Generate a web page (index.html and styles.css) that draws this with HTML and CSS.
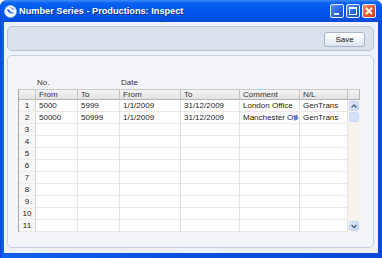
FILE: index.html
```html
<!DOCTYPE html>
<html lang="en">
<head>
  <meta charset="UTF-8" />
  <title>Number Series - Productions: Inspect</title>
  <link rel="stylesheet" href="styles.css">
</head>
<body>
  <div class="window">
    <!-- title bar -->
    <div class="titlebar">
      <svg class="app-icon" width="13" height="13" viewBox="0 0 13 13">
        <circle cx="6.5" cy="6.5" r="6" fill="#f4f8ff" stroke="#9dbdf0" stroke-width="0.8"/>
        <path d="M3 4.5 C4 8.5 8.5 10 10.5 7 C9 8.2 6.5 7.6 5.6 5.6 C5 4.4 4 4 3 4.5 Z" fill="#1c5fd8"/>
        <path d="M6 2.6 C8 2.2 10 3.6 10.4 5.4 C9.2 4.2 7.8 3.6 6 2.6 Z" fill="#1c5fd8"/>
      </svg>
      <span class="title">Number Series - Productions: Inspect</span>
      <div class="caption-buttons">
        <span class="cap-btn"><svg width="12" height="12" viewBox="0 0 12 12"><rect x="3" y="8" width="5" height="2" fill="#fff"/></svg></span>
        <span class="cap-btn"><svg width="12" height="12" viewBox="0 0 12 12"><rect x="2.5" y="2.5" width="7" height="7" fill="none" stroke="#fff" stroke-width="1"/><rect x="2" y="2" width="8" height="2" fill="#fff"/></svg></span>
        <span class="cap-btn close"><svg width="12" height="12" viewBox="0 0 12 12"><path d="M3 3 L9 9 M9 3 L3 9" stroke="#fff" stroke-width="1.8"/></svg></span>
      </div>
    </div>

    <div class="content">
      <div class="toolbar">
        <button class="save">Save</button>
      </div>

      <div class="panel">
        <div class="group-labels">
          <span class="lbl-no">No.</span>
          <span>Date</span>
        </div>

        <table class="grid">
          <colgroup>
            <col class="c-num"><col class="c-from"><col class="c-to"><col class="c-dfrom">
            <col class="c-dto"><col class="c-comment"><col class="c-nl"><col class="c-scroll">
          </colgroup>
          <thead>
            <tr><th></th><th>From</th><th>To</th><th>From</th><th>To</th><th>Comment</th><th>N/L</th><th></th></tr>
          </thead>
          <tbody>
            <tr>
              <td class="num">1</td><td>5000</td><td>5999</td><td>1/1/2009</td><td>31/12/2009</td><td>London Office</td><td>GenTrans</td>
              <td class="scroll-cell" rowspan="11">
                <div class="scrollbar">
                  <span class="arrow"><svg width="8" height="8" viewBox="0 0 8 8"><path d="M1.5 5.5 L4 3 L6.5 5.5" fill="none" stroke="#4d6185" stroke-width="1.3"/></svg></span>
                  <span class="thumb"></span>
                  <span class="track"></span>
                  <span class="arrow"><svg width="8" height="8" viewBox="0 0 8 8"><path d="M1.5 3 L4 5.5 L6.5 3" fill="none" stroke="#4d6185" stroke-width="1.3"/></svg></span>
                </div>
              </td>
            </tr>
            <tr>
              <td class="num">2</td><td>50000</td><td>50999</td><td>1/1/2009</td><td>31/12/2009</td>
              <td class="clipped"><div class="clip"><span class="clip-text">Manchester Office</span><span class="more"></span></div></td>
              <td>GenTrans</td>
            </tr>
            <tr><td class="num">3</td><td></td><td></td><td></td><td></td><td></td><td></td></tr>
            <tr><td class="num">4</td><td></td><td></td><td></td><td></td><td></td><td></td></tr>
            <tr><td class="num">5</td><td></td><td></td><td></td><td></td><td></td><td></td></tr>
            <tr><td class="num">6</td><td></td><td></td><td></td><td></td><td></td><td></td></tr>
            <tr><td class="num">7</td><td></td><td></td><td></td><td></td><td></td><td></td></tr>
            <tr><td class="num">8</td><td></td><td></td><td></td><td></td><td></td><td></td></tr>
            <tr><td class="num">9</td><td></td><td></td><td></td><td></td><td></td><td></td></tr>
            <tr><td class="num">10</td><td></td><td></td><td></td><td></td><td></td><td></td></tr>
            <tr><td class="num">11</td><td></td><td></td><td></td><td></td><td></td><td></td></tr>
          </tbody>
        </table>
      </div>
    </div>
  </div>
</body>
</html>
```

FILE: styles.css
```css
* { box-sizing: border-box; margin: 0; padding: 0; }

body {
  width: 382px;
  height: 258px;
  overflow: hidden;
  background: #fff;
  font-family: 'Liberation Sans', Arial, sans-serif;
  font-size: 8px;
  color: #222;
}

.window {
  height: 258px;
  display: flex;
  flex-direction: column;
  background: linear-gradient(90deg, #0a45d6, #1060ee 3px, #0a4fe0 50%, #0b4ad8);
  border-radius: 7px 7px 0 0;
}

/* title bar */
.titlebar {
  height: 22px;
  flex: none;
  display: flex;
  align-items: center;
  padding: 0 6px 0 4px;
  border-radius: 7px 7px 0 0;
  background: linear-gradient(#3f8cf7 0, #0a62f2 3px, #0058ee 40%, #0052e6 80%, #0049d6 100%);
}
.app-icon { flex: none; margin-right: 2px; }
.title {
  flex: 1;
  color: #fff;
  font-weight: bold;
  font-size: 9.2px;
  text-shadow: 1px 1px 0 #0a2f9a;
  white-space: nowrap;
}
.caption-buttons { display: flex; gap: 2px; }
.cap-btn {
  width: 14px;
  height: 14px;
  display: flex;
  align-items: center;
  justify-content: center;
  border: 1px solid #e6eeff;
  border-radius: 2px;
  background: linear-gradient(135deg, #5c92f8, #2a63e6 60%, #1d52d2);
}
.cap-btn.close {
  background: linear-gradient(135deg, #f0916e, #e25a33 55%, #c9401c);
}

/* client area */
.content {
  flex: 1;
  margin: 0 4px 5px;
  padding: 4px 4px 5px 3px;
  display: flex;
  flex-direction: column;
  gap: 4px;
  background: #eef1f9;
}

.toolbar {
  height: 25px;
  flex: none;
  display: flex;
  justify-content: flex-end;
  align-items: flex-start;
  padding: 5px 8px 0 0;
  border: 1px solid #b7c4dc;
  border-radius: 5px;
  background: #d9e1ef;
}
.save {
  width: 41px;
  height: 15px;
  border: 1px solid #a7b4cc;
  border-radius: 3px;
  background: linear-gradient(#ffffff, #eef1f7 60%, #dde3ee);
  font-family: 'Liberation Sans', Arial, sans-serif;
  font-size: 8px;
  color: #111;
}

.panel {
  flex: 1;
  padding: 21px 0 0 10px;
  border: 1px solid #c5d0e3;
  border-radius: 5px;
  background: #f3f5fb;
}

.group-labels {
  height: 11px;
  margin-bottom: 1px;
  padding-left: 19px;
  display: flex;
  align-items: center;
  color: #333;
}
.lbl-no { width: 84px; }

/* grid */
.grid {
  table-layout: fixed;
  width: 341px;
  border-collapse: separate;
  border-spacing: 0;
  background: #fff;
  border-left: 1px solid #a9a9a9;
}
.c-num { width: 17px; }
.c-from { width: 42px; }
.c-to { width: 42px; }
.c-dfrom { width: 61px; }
.c-dto { width: 59px; }
.c-comment { width: 60px; }
.c-nl { width: 48px; }
.c-scroll { width: 12px; }

.grid th {
  height: 11px;
  padding: 0 3px;
  text-align: left;
  font-weight: normal;
  color: #333;
  line-height: 9px;
  background: linear-gradient(#f4f4f4, #e2e2e2);
  border-top: 1px solid #c8c8c8;
  border-right: 1px solid #c2c2c2;
  border-bottom: 1px solid #b4b4b4;
}
.grid th:last-child { border-right: 1px solid #b8b8b8; }

.grid td {
  height: 12px;
  padding: 0 3px;
  line-height: 11px;
  white-space: nowrap;
  overflow: hidden;
  border-right: 1px solid #e8e2de;
  border-bottom: 1px solid #f1e6df;
}
.grid td.num {
  text-align: center;
  padding: 0;
  background: #f6f6f6;
  border-right-color: #d6d6d6;
  border-bottom-color: #ececec;
}

.grid td.clipped { padding-right: 0; }
.clip { display: flex; align-items: center; width: 56px; }
.clip-text { flex: 1; min-width: 0; overflow: hidden; }
.more {
  flex: none;
  width: 0;
  height: 0;
  margin-left: -4px;
  border-top: 3px solid transparent;
  border-bottom: 3px solid transparent;
  border-left: 5px solid #5a86d8;
}

/* scrollbar */
.grid td.scroll-cell {
  padding: 0;
  vertical-align: top;
  border: none;
  background: #f5f3ec;
}
.scrollbar {
  height: 132px;
  display: flex;
  flex-direction: column;
  align-items: center;
  padding: 1px 0;
}
.arrow {
  width: 10px;
  height: 10px;
  display: flex;
  align-items: center;
  justify-content: center;
  border: 1px solid #c3d3f5;
  border-radius: 2px;
  background: linear-gradient(135deg, #e2ebfd, #c5d6f9);
}
.thumb {
  width: 10px;
  height: 10px;
  margin-top: 1px;
  border: 1px solid #c9d8f7;
  border-radius: 2px;
  background: #d3e0fb;
}
.track { flex: 1; }
```
